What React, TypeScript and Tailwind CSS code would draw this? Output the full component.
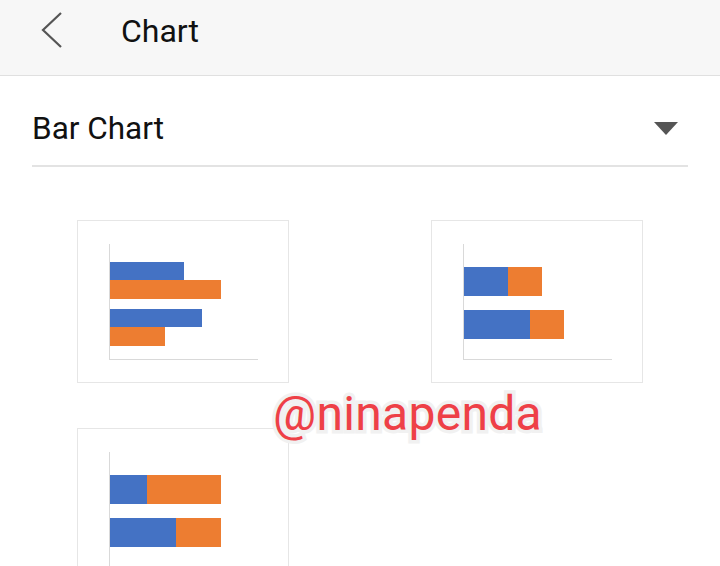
type Bar = { blue: number; orange: number };

type Chart = {
  stacked: boolean;
  rows: Bar[];
};

const charts: Chart[] = [
  { stacked: false, rows: [{ blue: 74, orange: 111 }, { blue: 92, orange: 55 }] },
  { stacked: true, rows: [{ blue: 44, orange: 34 }, { blue: 66, orange: 34 }] },
  { stacked: true, rows: [{ blue: 37, orange: 74 }, { blue: 66, orange: 45 }] },
];

function ChartCard({ chart }: { chart: Chart }) {
  return (
    <div className="w-[212px] h-[163px] border border-[#e6e6e6] bg-white pl-[31px] pt-[23px]">
      <div className="relative w-[149px] h-[116px] border-l border-b border-[#d9d9d9]">
        {chart.stacked ? (
          <div className="flex flex-col gap-[14px] pt-[23px]">
            {chart.rows.map((r, i) => (
              <div key={i} className="flex h-[29px]">
                <div className="bg-[#4472c4] h-full" style={{ width: r.blue }} />
                <div className="bg-[#ed7d31] h-full" style={{ width: r.orange }} />
              </div>
            ))}
          </div>
        ) : (
          <div className="flex flex-col gap-[10px] pt-[18px]">
            {chart.rows.map((r, i) => (
              <div key={i} className="flex flex-col">
                <div className="bg-[#4472c4] h-[18px]" style={{ width: r.blue }} />
                <div className="bg-[#ed7d31] h-[19px]" style={{ width: r.orange }} />
              </div>
            ))}
          </div>
        )}
      </div>
    </div>
  );
}

export default function App() {
  return (
    <div className="relative w-[720px] h-[566px] overflow-hidden bg-white font-['Roboto',sans-serif]">
      <header className="h-[76px] bg-[#f7f7f7] border-b border-[#e0e0e0] flex items-center">
        <svg width="60" height="60" viewBox="0 0 60 60" className="ml-[22px] -mt-[12px]">
          <path d="M39 11 L21 28 L39 45" fill="none" stroke="#555" strokeWidth="2.2" />
        </svg>
        <h1 className="ml-[39px] -mt-[14px] text-[32px] text-[#111]">Chart</h1>
      </header>

      <div className="px-[32px]">
        <div className="h-[91px] flex items-center justify-between border-b-2 border-[#e3e3e3]">
          <span className="text-[31.5px] text-[#111] mt-[16px]">Bar Chart</span>
          <svg width="24" height="13" viewBox="0 0 24 13" className="mr-[10px] mt-[16px]">
            <path d="M0 0 H24 L12 13 Z" fill="#555" />
          </svg>
        </div>

        <div className="grid grid-cols-[212px_212px] gap-x-[142px] gap-y-[45px] pl-[45px] pt-[53px]">
          {charts.map((c, i) => (
            <ChartCard key={i} chart={c} />
          ))}
        </div>
      </div>

      <div className="absolute left-[273px] top-[378px] text-[48px] tracking-[0.3px] text-[#ee4047] [paint-order:stroke_fill] [-webkit-text-stroke:7px_#f1f1f1]">
        @ninapenda
      </div>
    </div>
  );
}
